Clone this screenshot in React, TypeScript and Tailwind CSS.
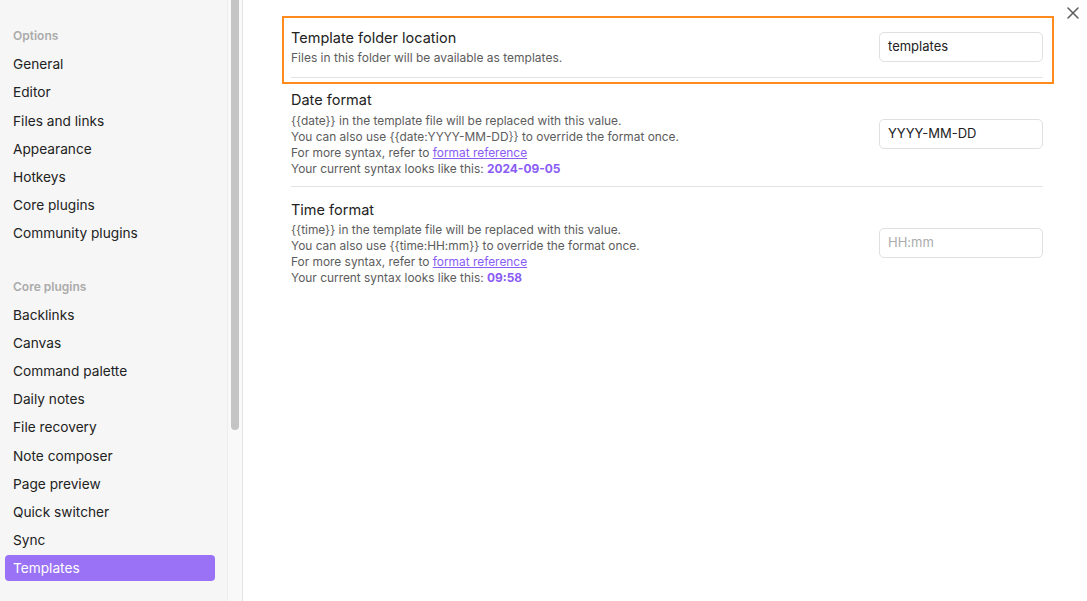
import React from "react";

const optionItems = [
  "General",
  "Editor",
  "Files and links",
  "Appearance",
  "Hotkeys",
  "Core plugins",
  "Community plugins",
];

const coreItems = [
  "Backlinks",
  "Canvas",
  "Command palette",
  "Daily notes",
  "File recovery",
  "Note composer",
  "Page preview",
  "Quick switcher",
  "Sync",
  "Templates",
];

function NavItem({ label, active }: { label: string; active?: boolean }) {
  return (
    <div
      className={
        "h-[26px] leading-[26px] px-[8px] rounded-[4px] text-[13.7px] whitespace-nowrap " +
        (active ? "bg-[#9a72f5] text-white" : "text-[#222222]")
      }
    >
      {label}
    </div>
  );
}

function NavHeader({ label }: { label: string }) {
  return (
    <div className="h-[26px] leading-[26px] px-[8px] text-[12px] font-semibold text-[#ababab]">
      {label}
    </div>
  );
}

function Input({ value, placeholder }: { value?: string; placeholder?: string }) {
  return (
    <div className="w-[164px] h-[30px] shrink-0 rounded-[5px] border border-[#e0e0e0] bg-white px-[8px] flex items-center text-[13px]">
      {value ? (
        <span className="text-[#222222]">{value}</span>
      ) : (
        <span className="text-[#ababab]">{placeholder}</span>
      )}
    </div>
  );
}

export default function App() {
  return (
    <div
      className="relative w-[1087px] h-[601px] flex bg-white overflow-hidden"
      style={{ fontFamily: "Inter, 'Noto Sans', sans-serif" }}
    >
      {/* Sidebar */}
      <div className="w-[227px] h-full bg-[#f6f6f6] pl-[5px] pr-[12px] pt-[23px] flex flex-col">
        <div className="flex flex-col gap-[2.2px]">
          <NavHeader label="Options" />
          {optionItems.map((l) => (
            <NavItem key={l} label={l} />
          ))}
        </div>
        <div className="flex flex-col gap-[2.2px] mt-[27.2px]">
          <NavHeader label="Core plugins" />
          {coreItems.map((l) => (
            <NavItem key={l} label={l} active={l === "Templates"} />
          ))}
        </div>
      </div>

      {/* Scroll gutter */}
      <div className="w-[16px] h-full bg-[#f9f9f9] border-l border-r border-l-[#ededed] border-r-[#e3e3e3] pl-[3px]">
        <div className="w-[8px] h-[430px] bg-[#c4c4c4] rounded-b-full" />
      </div>

      {/* Main content */}
      <div className="flex-1 pt-[16px] pl-[39px] pr-[33px]">
        <div className="border-2 border-[#ff8a1e] pl-[7px] pr-[9px] pb-[4px]">
          <div className="flex items-center border-b border-[#e3e3e3] pt-[10px] pb-[11px]">
            <div className="flex-1">
              <div className="text-[14.5px] leading-[20px] text-[#222222]">Template folder location</div>
              <div className="mt-[2px] text-[12px] leading-[16px] text-[#5c5c5c]">
                Files in this folder will be available as templates.
              </div>
            </div>
            <Input value="templates" />
          </div>
        </div>

        <div className="ml-[9px] mr-[11px]">
          <div className="flex items-center border-b border-[#e3e3e3] pt-[6px] pb-[9px]">
            <div className="flex-1">
              <div className="text-[14.5px] leading-[20px] text-[#222222]">Date format</div>
              <div className="mt-[3px] text-[11.9px] leading-[16px] text-[#5c5c5c]">
                <div>{"{{date}}"} in the template file will be replaced with this value.</div>
                <div>You can also use {"{{date:YYYY-MM-DD}}"} to override the format once.</div>
                <div>
                  For more syntax, refer to{" "}
                  <span className="text-[#8a5cf5] underline">format reference</span>
                </div>
                <div>
                  Your current syntax looks like this:{" "}
                  <span className="text-[#8a5cf5] font-bold">2024-09-05</span>
                </div>
              </div>
            </div>
            <Input value="YYYY-MM-DD" />
          </div>

          <div className="flex items-center pt-[13px] pb-[10px]">
            <div className="flex-1">
              <div className="text-[14.5px] leading-[20px] text-[#222222]">Time format</div>
              <div className="mt-[2px] text-[11.9px] leading-[16px] text-[#5c5c5c]">
                <div>{"{{time}}"} in the template file will be replaced with this value.</div>
                <div>You can also use {"{{time:HH:mm}}"} to override the format once.</div>
                <div>
                  For more syntax, refer to{" "}
                  <span className="text-[#8a5cf5] underline">format reference</span>
                </div>
                <div>
                  Your current syntax looks like this:{" "}
                  <span className="text-[#8a5cf5] font-bold">09:58</span>
                </div>
              </div>
            </div>
            <Input placeholder="HH:mm" />
          </div>
        </div>
      </div>

      {/* Close button */}
      <div className="absolute top-[6px] right-[7px] w-[14px] h-[14px] flex items-center justify-center">
        <svg width="14" height="14" viewBox="0 0 14 14">
          <path d="M2 2 L12 12 M12 2 L2 12" stroke="#5c5c5c" strokeWidth="1.5" strokeLinecap="round" />
        </svg>
      </div>
    </div>
  );
}
